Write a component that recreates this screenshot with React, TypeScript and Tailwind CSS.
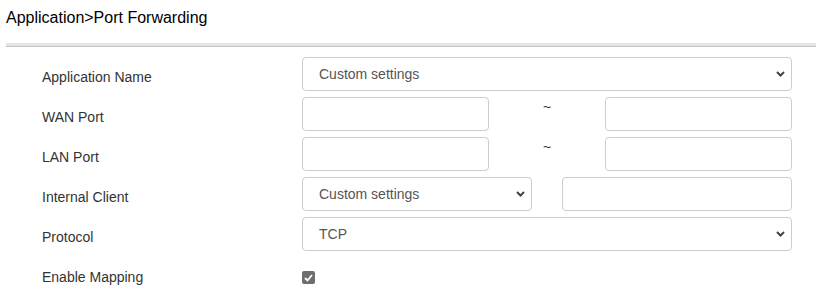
import React from "react";

function Chevron() {
  return (
    <svg
      className="absolute right-[7px] top-1/2 -translate-y-1/2 pointer-events-none"
      width="9"
      height="6"
      viewBox="0 0 9 6"
    >
      <polyline points="1,1 4.5,4.5 8,1" fill="none" stroke="#444" strokeWidth="2" />
    </svg>
  );
}

function Select({ value, className }: { value: string; className: string }) {
  return (
    <div className={`relative h-[34px] ${className}`}>
      <div className="h-full w-full rounded-[4px] border border-[#cccccc] bg-white pl-[16px] text-[14px] leading-[32px] text-[#555555]">
        {value}
      </div>
      <Chevron />
    </div>
  );
}

function Input({ className }: { className: string }) {
  return <div className={`h-[34px] rounded-[4px] border border-[#cccccc] bg-white ${className}`} />;
}

function Row({ label, children }: { label: string; children: React.ReactNode }) {
  return (
    <div className="flex h-[34px]">
      <div className="w-[260px] pt-[10px] text-[14px] leading-[20px] text-[#333333]">{label}</div>
      <div className="flex w-[490px]">{children}</div>
    </div>
  );
}

export default function App() {
  return (
    <div className="w-[820px] h-[292px] bg-white font-['Liberation_Sans',Arial,sans-serif] overflow-hidden">
      <div className="pl-[6px] pt-[8px] text-[16px] leading-[20px] text-black">
        Application&gt;Port Forwarding
      </div>
      <div className="ml-[6px] mt-[15px] w-[810px] h-[4px] bg-[#e5e5e5] border-b border-[#c4c4c4]" />
      <div className="mt-[10px] pl-[42px] flex flex-col gap-[6px]">
        <Row label="Application Name">
          <Select value="Custom settings" className="w-[490px]" />
        </Row>
        <Row label="WAN Port">
          <Input className="w-[187px]" />
          <div className="w-[116px] text-center text-[14px] leading-[20px] text-[#333333]">~</div>
          <Input className="w-[187px]" />
        </Row>
        <Row label="LAN Port">
          <Input className="w-[187px]" />
          <div className="w-[116px] text-center text-[14px] leading-[20px] text-[#333333]">~</div>
          <Input className="w-[187px]" />
        </Row>
        <Row label="Internal Client">
          <Select value="Custom settings" className="w-[230px]" />
          <div className="w-[30px]" />
          <Input className="w-[230px]" />
        </Row>
        <Row label="Protocol">
          <Select value="TCP" className="w-[490px]" />
        </Row>
        <Row label="Enable Mapping">
          <div className="pt-[14px]">
            <div className="w-[13px] h-[13px] rounded-[2px] bg-[#6e6e6e] flex items-center justify-center">
              <svg width="9" height="8" viewBox="0 0 9 8">
                <polyline points="1,4 3.5,6.5 8,1" fill="none" stroke="#fff" strokeWidth="1.8" />
              </svg>
            </div>
          </div>
        </Row>
      </div>
    </div>
  );
}
